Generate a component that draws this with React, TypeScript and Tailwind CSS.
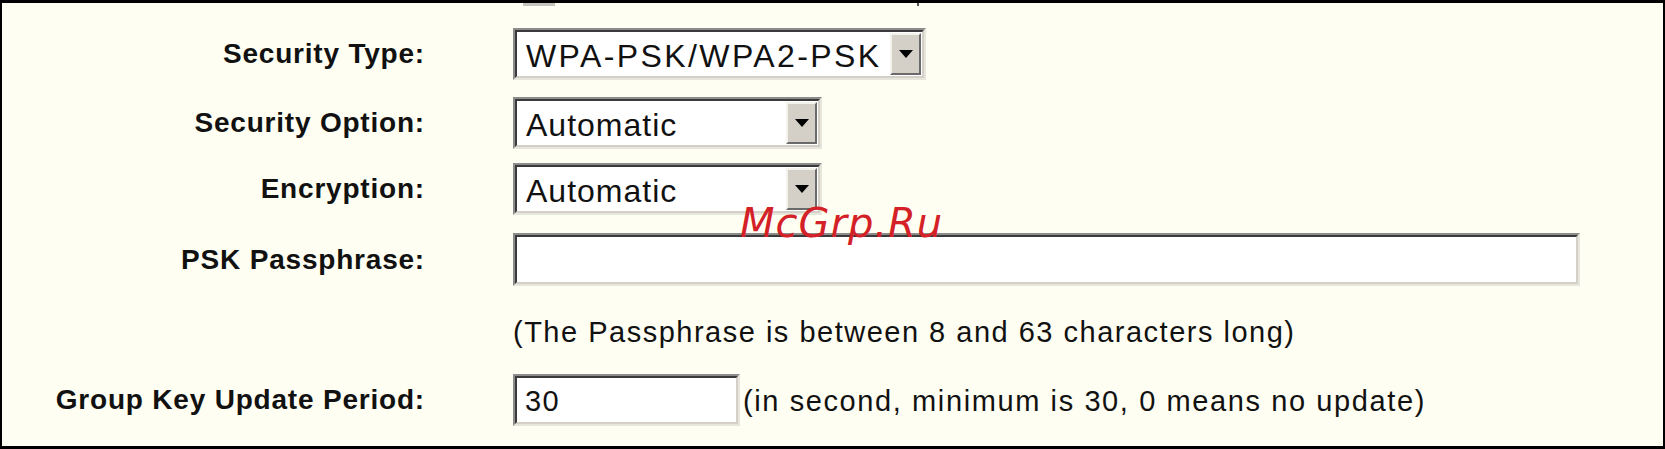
const font = { fontFamily: '"Liberation Sans", Arial, sans-serif' };

function Sunken({ className, children }: { className: string; children?: React.ReactNode }) {
  return (
    <div
      className={`border-2 border-t-[#8c8c8c] border-l-[#8c8c8c] border-b-[#e6e6dc] border-r-[#e6e6dc] ${className}`}
    >
      <div className="flex h-full w-full items-center border-2 border-t-[#3a3a3a] border-l-[#3a3a3a] border-b-[#d4d0c8] border-r-[#d4d0c8] bg-white">
        {children}
      </div>
    </div>
  );
}

function SelectBox({ className, value, wide }: { className: string; value: string; wide?: boolean }) {
  return (
    <Sunken className={className}>
      <span
        className={`flex-1 pl-[9px] pt-[4px] text-[32px] leading-none text-[#111] ${wide ? "tracking-[2.4px]" : "tracking-[1px]"}`}
      >
        {value}
      </span>
      <div className="mr-px flex h-[calc(100%-2px)] w-[31px] items-center justify-center border-2 border-t-[#f4f2ec] border-l-[#f4f2ec] border-b-[#6a6a6a] border-r-[#6a6a6a] bg-[#d4d0c8]">
        <svg width="14" height="8" viewBox="0 0 14 8">
          <polygon points="0,0 14,0 7,8" fill="#000" />
        </svg>
      </div>
    </Sunken>
  );
}

function Label({ children }: { children: React.ReactNode }) {
  return (
    <div className="flex items-center justify-end text-[28px] font-bold leading-none tracking-[0.8px] text-[#111]">
      {children}
    </div>
  );
}

export default function App() {
  return (
    <div
      className="relative h-[449px] w-[1665px] overflow-hidden border-t-[3px] border-b-[3px] border-x-2 border-black bg-[#fefef2]"
      style={font}
    >
      <div className="grid grid-cols-[423px_1fr] gap-x-[88px]">
        {/* cut-off row above */}
        <div />
        <div className="flex h-[4px] items-start">
          <div className="ml-[10px] h-[3px] w-[32px] bg-[#c4c4bc]" />
          <div className="ml-[362px] h-[3px] w-[2px] bg-[#555]" />
        </div>

        <div className="col-span-2 h-[21px]" />
        <Label>Security Type:</Label>
        <SelectBox className="h-[52px] w-[413px]" value="WPA-PSK/WPA2-PSK" wide />

        <div className="col-span-2 h-[17px]" />
        <Label>Security Option:</Label>
        <SelectBox className="h-[52px] w-[309px]" value="Automatic" />

        <div className="col-span-2 h-[14px]" />
        <Label>Encryption:</Label>
        <SelectBox className="h-[52px] w-[309px]" value="Automatic" />

        <div className="col-span-2 h-[18px]" />
        <Label>PSK Passphrase:</Label>
        <Sunken className="h-[53px] w-[1067px]" />

        <div className="col-span-2 h-[26px]" />
        <div />
        <div className="flex h-[40px] items-center text-[29px] leading-none tracking-[1.5px] text-[#111]">
          (The Passphrase is between 8 and 63 characters long)
        </div>

        <div className="col-span-2 h-[22px]" />
        <Label>Group Key Update Period:</Label>
        <div className="flex h-[52px] items-center">
          <Sunken className="h-[52px] w-[227px]">
            <span className="pl-[8px] pt-[3px] text-[29px] leading-none tracking-[1.4px] text-[#111]">30</span>
          </Sunken>
          <span className="ml-[3px] pt-[3px] text-[29px] leading-none tracking-[1.6px] text-[#111]">
            (in second, minimum is 30, 0 means no update)
          </span>
        </div>
      </div>

      <div
        className="absolute left-[738px] top-[200px] text-[40px] italic leading-none tracking-[1px] text-[#d42027]"
        style={{ fontFamily: '"DejaVu Sans", sans-serif' }}
      >
        McGrp.Ru
      </div>
    </div>
  );
}
